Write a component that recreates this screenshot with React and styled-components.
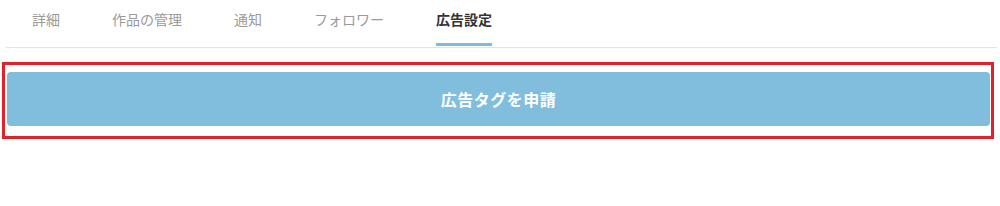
import React, { useState } from 'react';
import styled, { createGlobalStyle } from 'styled-components';

const GlobalStyle = createGlobalStyle`
  body {
    margin: 0;
    background: #fff;
    font-family: "Noto Sans CJK JP", "Noto Sans", sans-serif;
  }
`;

const Page = styled.div`
  width: 1000px;
  height: 206px;
  background: #fff;
`;

const TabBar = styled.nav`
  display: flex;
  margin: 0 3px 0 6px;
  height: 47px;
  border-bottom: 1px solid #e3e3e3;
`;

const Tab = styled.button`
  position: relative;
  border: 0;
  background: none;
  padding: 0 26px;
  font-family: inherit;
  font-size: 14px;
  font-weight: ${({ $active }) => ($active ? 700 : 400)};
  color: ${({ $active }) => ($active ? '#333' : '#9a9a9a')};
  cursor: pointer;
  display: flex;
  align-items: center;
  height: 38px;
  align-self: flex-start;

  &::after {
    content: '';
    display: ${({ $active }) => ($active ? 'block' : 'none')};
    position: absolute;
    left: 26px;
    right: 26px;
    top: 43px;
    height: 3px;
    background: #7fbcdc;
  }
`;

const Highlight = styled.div`
  margin: 14px 6px 0 2px;
  border: 3px solid #e3212b;
  padding: 7px 1px 10px 2px;
`;

const ApplyButton = styled.button`
  display: block;
  width: 100%;
  height: 54px;
  border: 0;
  border-radius: 4px;
  background: #81bddc;
  color: #fff;
  font-family: inherit;
  font-size: 16px;
  font-weight: 700;
  letter-spacing: 0.5px;
  cursor: pointer;
`;

const tabs = ['詳細', '作品の管理', '通知', 'フォロワー', '広告設定'];

export default function App() {
  const [active, setActive] = useState(4);
  return (
    <Page>
      <GlobalStyle />
      <TabBar>
        {tabs.map((t, i) => (
          <Tab key={t} $active={i === active} onClick={() => setActive(i)}>
            {t}
          </Tab>
        ))}
      </TabBar>
      <Highlight>
        <ApplyButton>広告タグを申請</ApplyButton>
      </Highlight>
    </Page>
  );
}
